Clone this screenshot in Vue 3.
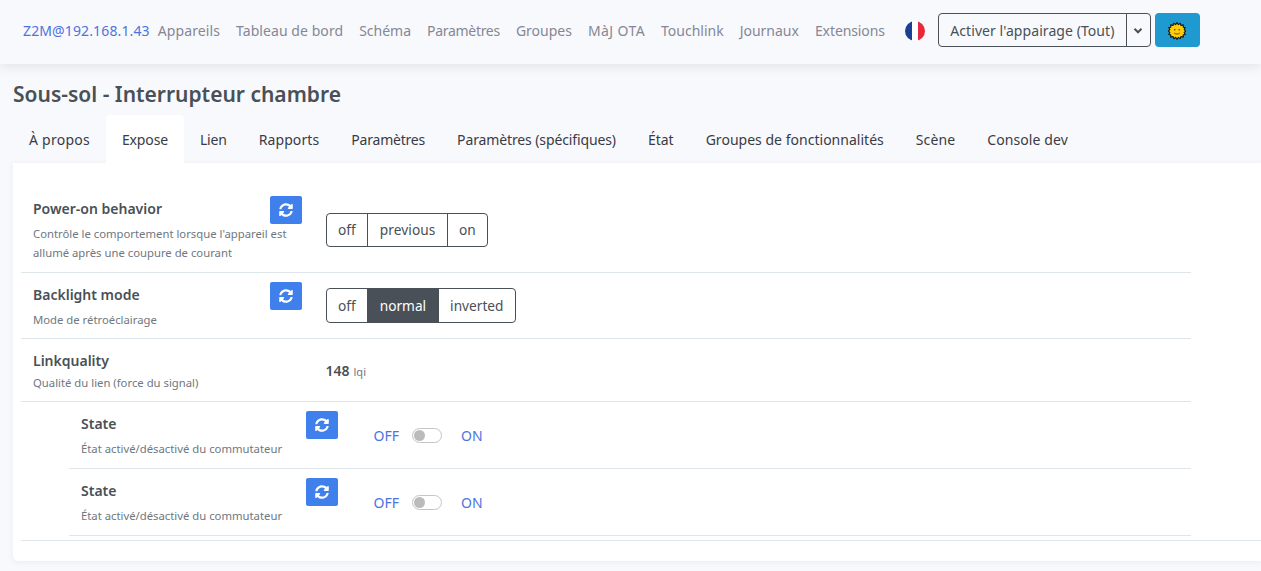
<script setup>
const navItems = [
  { label: 'Appareils', ls: 0.1 },
  { label: 'Tableau de bord', ls: 0.07 },
  { label: 'Schéma', ls: 0 },
  { label: 'Paramètres', ls: -0.3 },
  { label: 'Groupes', ls: 0 },
  { label: 'MàJ OTA', ls: 0.4 },
  { label: 'Touchlink', ls: 0 },
  { label: 'Journaux', ls: 0 },
  { label: 'Extensions', ls: -0.1 }
]
const tabs = [
  { label: 'À propos', ls: 0.25 },
  { label: 'Expose', ls: -0.15 },
  { label: 'Lien', ls: -0.2 },
  { label: 'Rapports', ls: 0.1 },
  { label: 'Paramètres', ls: -0.2 },
  { label: 'Paramètres (spécifiques)', ls: -0.12 },
  { label: 'État', ls: 0 },
  { label: 'Groupes de fonctionnalités', ls: 0.02 },
  { label: 'Scène', ls: 0.1 },
  { label: 'Console dev', ls: 0.1 }
]
const syncPath = 'M370.72 133.28C339.458 104.008 298.888 87.962 255.848 88c-77.458.068-144.328 53.178-162.791 126.85-1.344 5.363-6.122 9.15-11.651 9.15H24.103c-7.498 0-13.194-6.807-11.807-14.176C33.933 94.924 134.813 8 256 8c66.448 0 126.791 26.136 171.315 68.685L463.03 40.97C478.149 25.851 504 36.559 504 57.941V192c0 13.255-10.745 24-24 24H345.941c-21.382 0-32.09-25.851-16.971-40.971l41.75-41.749zM32 296h134.059c21.382 0 32.09 25.851 16.971 40.971l-41.75 41.75c31.262 29.273 71.835 45.319 114.876 45.28 77.418-.07 144.315-53.144 162.787-126.849 1.344-5.363 6.122-9.15 11.651-9.15h57.304c7.498 0 13.194 6.807 11.807 14.176C478.067 417.076 377.187 504 256 504c-66.448 0-126.791-26.136-171.315-68.685L48.97 471.03C33.851 486.149 8 475.441 8 454.059V320c0-13.255 10.745-24 24-24z'
const states = [1, 2]
</script>

<template>
  <div class="page">
    <nav class="navbar">
      <a class="brand">Z2M@192.168.1.43</a>
      <ul class="nav-list">
        <li v-for="item in navItems" :key="item.label" :style="{ letterSpacing: item.ls + 'px' }">{{ item.label }}</li>
      </ul>
      <svg class="flag" width="20" height="20" viewBox="0 0 20 20">
        <defs><clipPath id="flagclip"><circle cx="10" cy="10" r="10" /></clipPath></defs>
        <g clip-path="url(#flagclip)">
          <rect width="7" height="20" fill="#1c3f94" />
          <rect x="7" width="6" height="20" fill="#fff" />
          <rect x="13" width="7" height="20" fill="#e8293b" />
        </g>
      </svg>
      <div class="permit">
        <button class="permit-main">Activer l'appairage (Tout)</button>
        <button class="permit-toggle">
          <svg class="chev" width="10" height="8" viewBox="0 0 10 8"><path d="M1.5 1.8 5 5.3 8.5 1.8" fill="none" stroke="#495057" stroke-width="2" /></svg>
        </button>
      </div>
      <button class="theme">
        <svg class="sun" width="18" height="18" viewBox="0 0 18 18">
          <polygon points="9,0.6 10.4,2.6 12.3,1.3 13,3.5 15.3,2.9 15.2,5.2 17.3,5.5 16.2,7.6 17.8,9 16.2,10.4 17.3,12.5 15.2,12.8 15.3,15.1 13,14.5 12.3,16.7 10.4,15.4 9,17.4 7.6,15.4 5.7,16.7 5,14.5 2.7,15.1 2.8,12.8 0.7,12.5 1.8,10.4 0.2,9 1.8,7.6 0.7,5.5 2.8,5.2 2.7,2.9 5,3.5 5.7,1.3 7.6,2.6" fill="#ffcc0a" stroke="#141414" stroke-width="1.1" stroke-linejoin="round" />
          <circle cx="6.8" cy="7.8" r="0.8" fill="#5a3c00" />
          <circle cx="11.2" cy="7.8" r="0.8" fill="#5a3c00" />
          <path d="M6.2 11c1.5 1.4 4.1 1.4 5.6 0" fill="none" stroke="#5a3c00" stroke-width="0.9" />
        </svg>
      </button>
    </nav>

    <main class="main">
      <h1 class="title">Sous-sol - Interrupteur chambre</h1>
      <ul class="tabs">
        <li v-for="tab in tabs" :key="tab.label" class="tab" :class="{ active: tab.label === 'Expose' }" :style="{ letterSpacing: tab.ls + 'px' }">{{ tab.label }}</li>
      </ul>

      <section class="card">
        <div class="row first">
          <div class="label-col">
            <div class="label-head">
              <span class="label-title">Power-on behavior</span>
              <button class="sync"><svg width="14" height="14" viewBox="0 0 512 512"><path :d="syncPath" fill="#fff" /></svg></button>
            </div>
            <p class="desc">Contrôle le comportement lorsque l'appareil est allumé après une coupure de courant</p>
          </div>
          <div class="value-col">
            <div class="group">
              <span class="opt">off</span><span class="opt wide">previous</span><span class="opt narrow">on</span>
            </div>
          </div>
        </div>

        <div class="row">
          <div class="label-col">
            <div class="label-head">
              <span class="label-title">Backlight mode</span>
              <button class="sync"><svg width="14" height="14" viewBox="0 0 512 512"><path :d="syncPath" fill="#fff" /></svg></button>
            </div>
            <p class="desc">Mode de rétroéclairage</p>
          </div>
          <div class="value-col">
            <div class="group tall">
              <span class="opt">off</span><span class="opt on">normal</span><span class="opt">inverted</span>
            </div>
          </div>
        </div>

        <div class="row">
          <div class="label-col">
            <div class="label-head short">
              <span class="label-title">Linkquality</span>
            </div>
            <p class="desc">Qualité du lien (force du signal)</p>
          </div>
          <div class="value-col reading">
            <strong class="num">148</strong><small class="unit">lqi</small>
          </div>
        </div>

        <div class="nested">
          <div v-for="s in states" :key="s" class="row nested-row">
            <div class="label-col">
              <div class="label-head">
                <span class="label-title">State</span>
                <button class="sync"><svg width="14" height="14" viewBox="0 0 512 512"><path :d="syncPath" fill="#fff" /></svg></button>
              </div>
              <p class="desc">État activé/désactivé du commutateur</p>
            </div>
            <div class="value-col">
              <div class="switch">
                <span class="sw-label">OFF</span>
                <span class="track"><span class="knob"></span></span>
                <span class="sw-label">ON</span>
              </div>
            </div>
          </div>
        </div>
      </section>
    </main>
  </div>
</template>

<style>
html, body { margin: 0; background: #f8f9fc; overflow: hidden; }
</style>

<style scoped>
.page {
  width: 1261px;
  height: 571px;
  overflow: hidden;
  background: #f8f9fc;
  font-family: "Noto Sans", "Open Sans", sans-serif;
  font-size: 14px;
  color: #495057;
}
.navbar {
  height: 64px;
  box-sizing: border-box;
  padding: 13px 0 0 23px;
  display: flex;
  align-items: flex-start;
  background: #f8f9fc;
  box-shadow: 0 2px 12px rgba(58, 59, 69, 0.12);
  position: relative;
}
.brand { color: #4e73df; line-height: 36px; margin-right: 8px; letter-spacing: 0.13px; }
.nav-list {
  list-style: none;
  margin: 0;
  padding: 0;
  display: flex;
  gap: 16px;
  color: #858796;
  line-height: 36px;
}
.flag { margin: 8px 13px 0 20px; }
.permit { display: flex; height: 34px; }
.permit-main, .permit-toggle {
  font: inherit;
  color: #495057;
  background: transparent;
  border: 1px solid #495057;
  padding: 0;
  box-sizing: border-box;
}
.permit-main { width: 189px; border-radius: 4px 0 0 4px; letter-spacing: 0.07px; }
.permit-toggle { width: 25px; margin-left: -1px; border-radius: 0 4px 4px 0; display: flex; align-items: center; justify-content: center; }
.chev { margin-top: 1px; }
.theme {
  width: 45px;
  height: 34px;
  margin-left: 4px;
  border: 0;
  padding: 0;
  border-radius: 4px;
  background: #1e9ad0;
  display: flex;
  align-items: center;
  justify-content: center;
}
.sun { margin-top: 2px; }
.main { padding-left: 13px; }
.title {
  margin: 0;
  padding-top: 15px;
  font-size: 21px;
  line-height: 30px;
  font-weight: 600;
  color: #495057;
}
.tabs {
  list-style: none;
  margin: 6px 0 0;
  padding: 0;
  display: flex;
  height: 48px;
  color: #3a3b45;
}
.tab { padding: 0 16px; height: 48px; line-height: 50px; border-radius: 4px 4px 0 0; }
.tab.active { background: #fff; }
.card {
  background: #fff;
  border-radius: 0 0 0 5px;
  height: 398px;
  box-sizing: border-box;
  padding: 24px 0 0 8px;
  box-shadow: 0 1px 6px rgba(58, 59, 69, 0.08);
}
.row {
  width: 1170px;
  display: grid;
  grid-template-columns: 25% 1fr;
  border-bottom: 1px solid #dee6ea;
}
.label-col { padding: 9px 12px 9px; }
.first .label-col { padding-bottom: 10px; }
.label-head { display: flex; justify-content: space-between; align-items: flex-start; height: 28px; }
.label-head.short { height: 25px; }
.label-title { font-size: 14px; font-weight: 600; line-height: 26px; color: #495057; }
.sync {
  width: 32px;
  height: 28px;
  border: 0;
  padding: 0;
  border-radius: 2px;
  background: #4080ec;
  display: flex;
  align-items: center;
  justify-content: center;
}
.desc { margin: 0; font-size: 11.3px; line-height: 19px; color: #6f7780; max-width: 258px; }
.value-col { padding: 0 12px; display: flex; align-items: center; }
.group {
  display: flex;
  height: 34px;
  box-sizing: border-box;
  border: 1px solid #495057;
  border-radius: 4px;
  overflow: hidden;
  font-size: 13.7px;
}
.group.tall { height: 35px; }
.opt { padding: 0 11.5px; display: flex; align-items: center; border-left: 1px solid #495057; }
.opt:first-child { border-left: 0; }
.opt.wide { letter-spacing: 0.1px; }
.opt.narrow { padding: 0 11px; }
.opt.on { background: #495057; color: #fff; font-weight: 400; }
.reading { align-items: baseline; padding-top: 22px; box-sizing: border-box; }
.num { font-weight: 600; }
.unit { font-size: 11px; margin-left: 4px; color: #6f7780; }
.nested { padding-bottom: 4px; border-bottom: 1px solid #dee6ea; width: 1248px; padding-left: 48px; box-sizing: border-box; }
.nested-row { width: 1122px; }
.nested-row .label-col { padding-bottom: 10px; }
.switch { display: flex; align-items: center; padding-left: 12px; color: #4e73df; }
.track {
  width: 30px;
  height: 15px;
  box-sizing: border-box;
  border: 1px solid #c4c4c4;
  border-radius: 8px;
  margin: 0 19px 0 13px;
  display: flex;
  align-items: center;
  padding-left: 1px;
}
.knob { width: 11px; height: 11px; border-radius: 50%; background: #bbb; }
</style>
